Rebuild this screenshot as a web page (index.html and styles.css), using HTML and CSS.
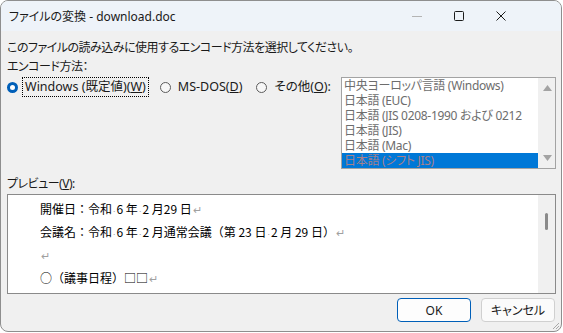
FILE: index.html
```html
<!DOCTYPE html>
<html lang="ja">

<head>
    <meta charset="UTF-8">
    <title>ファイルの変換</title>
    <link rel="stylesheet" href="styles.css">
</head>

<body>
    <div class="window">
        <div class="titlebar">
            <span class="title">ファイルの変換 - download.doc</span>
            <span class="cap">
                <svg width="10" height="10" viewBox="0 0 10 10"><path d="M0 5.5h10" stroke="#b4b4b4" stroke-width="1" /></svg>
            </span>
            <span class="cap">
                <svg width="10" height="10" viewBox="0 0 10 10"><rect x="0.5" y="0.5" width="9" height="9" rx="1" fill="none" stroke="#1b1b1b" stroke-width="1" /></svg>
            </span>
            <span class="cap">
                <svg width="10" height="10" viewBox="0 0 10 10"><path d="M0.5 0.5l9 9M9.5 0.5l-9 9" stroke="#1b1b1b" stroke-width="1" /></svg>
            </span>
        </div>

        <div class="content">
            <p class="line jp">このファイルの読み込みに使用するエンコード方法を選択してください。</p>
            <p class="line jp label">エンコード方法：</p>

            <div class="enc">
                <div class="radios">
                    <div class="radio">
                        <span class="dot checked"></span>
                        <span class="rtext focus">Windows (既定値)(<u>W</u>)</span>
                    </div>
                    <div class="radio">
                        <span class="dot"></span>
                        <span class="rtext">MS-DOS(<u>D</u>)</span>
                    </div>
                    <div class="radio">
                        <span class="dot"></span>
                        <span class="rtext">その他(<u>O</u>):</span>
                    </div>
                </div>

                <div class="listbox">
                    <ul class="items">
                        <li>中央ヨーロッパ言語 (Windows)</li>
                        <li>日本語 (EUC)</li>
                        <li>日本語 (JIS 0208-1990 および 0212</li>
                        <li>日本語 (JIS)</li>
                        <li>日本語 (Mac)</li>
                        <li class="selected">日本語 (シフト JIS)</li>
                    </ul>
                    <div class="lscroll">
                        <svg width="9" height="6" viewBox="0 0 9 6"><path d="M0 6L4.5 0L9 6z" fill="#a3a3a3" /></svg>
                        <svg width="9" height="6" viewBox="0 0 9 6"><path d="M0 0L4.5 6L9 0z" fill="#a3a3a3" /></svg>
                    </div>
                </div>
            </div>

            <p class="line jp preview-label">プレビュー(<u>V</u>):</p>

            <div class="preview">
                <div class="doc">
                    <p>開催日：令和<span class="sp">·</span>6 年<span class="sp">·</span>2 月29 日<span class="ret">↵</span></p>
                    <p>会議名：令和<span class="sp">·</span>6 年<span class="sp">·</span>2 月通常会議（第 23 日<span class="sp">·</span>2 月 29 日）<span class="ret">↵</span></p>
                    <p><span class="ret">↵</span></p>
                    <p>○（議事日程）□□<span class="ret">↵</span></p>
                </div>
                <div class="pscroll"><span class="thumb"></span></div>
            </div>

            <div class="buttons">
                <button class="btn default">OK</button>
                <button class="btn">キャンセル</button>
            </div>
        </div>

        <svg class="grip" width="8" height="8" viewBox="0 0 8 8">
            <path d="M7 1L1 7M7 4L4 7" stroke="#a8a8a8" stroke-width="1" />
        </svg>
    </div>
</body>

</html>
```

FILE: styles.css
```css
* {
    padding: 0;
    margin: 0;
    box-sizing: border-box;
}

body {
    background-color: #fff;
    font-family: "Noto Sans", "Noto Sans CJK JP", sans-serif;
    font-size: 12px;
    color: #1a1a1a;
    font-feature-settings: "palt";
}

.window {
    position: relative;
    width: 562px;
    height: 332px;
    border: 1px solid #8e8e8e;
    border-radius: 8px;
    overflow: hidden;
    background-color: #f0f0f0;
    display: flex;
    flex-direction: column;
}

.titlebar {
    height: 30px;
    background-color: #eef3f9;
    display: flex;
    align-items: center;
    padding-right: 39px;
}

.title {
    flex: 1;
    padding-left: 8px;
    font-size: 12px;
}

.cap {
    width: 42px;
    height: 30px;
    display: flex;
    align-items: center;
    justify-content: center;
}

.content {
    flex: 1;
    display: flex;
    flex-direction: column;
    padding: 9px 5px 0 6px;
}

.line {
    height: 15px;
    line-height: 15px;
    white-space: nowrap;
}

.jp {
    letter-spacing: -0.5px;
}

.label {
    margin-top: 4px;
}

/* encoding row */

.enc {
    display: flex;
    margin-top: 3px;
}

.radios {
    flex: 1;
    min-width: 0;
    display: flex;
    align-items: center;
    height: 20px;
    white-space: nowrap;
}

.radio {
    display: flex;
    align-items: center;
    flex-shrink: 0;
    margin-right: 11px;
}

.dot {
    width: 11px;
    height: 11px;
    flex-shrink: 0;
    border-radius: 50%;
    border: 1px solid #5c5c5c;
    background-color: #f7f7f7;
    margin-right: 4px;
}

.dot.checked {
    border: 3.5px solid #005fb8;
    background-color: #fff;
}

.rtext {
    font-size: 12.5px;
    line-height: 18px;
    padding: 0 2px;
    border: 1px solid transparent;
}

.rtext.focus {
    border: 1px dotted #000;
}

.listbox {
    width: 215px;
    height: 92px;
    flex-shrink: 0;
    border: 1px solid #a3a3a3;
    background-color: #fff;
    display: flex;
    overflow: hidden;
}

.items {
    list-style: none;
    width: 196px;
    overflow: hidden;
}

.items li {
    height: 15px;
    line-height: 15px;
    padding-left: 2px;
    color: #6d6d6d;
    letter-spacing: -0.3px;
    white-space: nowrap;
    overflow: hidden;
}

.items li.selected {
    background-color: #0078d7;
    color: #a8808a;
}

.lscroll {
    width: 17px;
    background-color: #f0f0f0;
    display: flex;
    flex-direction: column;
    justify-content: space-between;
    align-items: center;
    padding: 7px 0 7px 1px;
}

/* preview */

.preview-label {
    margin-top: 7px;
}

.preview {
    margin-top: 3px;
    height: 100px;
    border: 1px solid #8a8a8a;
    background-color: #fff;
    display: flex;
}

.doc {
    flex: 1;
    padding: 2px 0 0 32px;
    font-family: "Noto Sans CJK JP", sans-serif;
    font-feature-settings: normal;
    font-size: 12px;
    color: #000;
}

.doc p {
    height: 23px;
    line-height: 23px;
    white-space: nowrap;
}

.sp {
    color: #a0a0a0;
    font-size: 8px;
}

.ret {
    color: #a0a0a0;
    font-size: 11px;
    margin-left: 1px;
}

.pscroll {
    width: 17px;
    background-color: #f0f0f0;
    padding: 18px 0 0 7px;
}

.thumb {
    display: block;
    width: 3px;
    height: 17px;
    border-radius: 2px;
    background-color: #8a8a8a;
}

/* buttons */

.buttons {
    display: flex;
    justify-content: flex-end;
    gap: 10px;
    margin-top: 4px;
    padding-right: 1px;
}

.btn {
    width: 74px;
    height: 24px;
    border-radius: 4px;
    border: 1px solid #d0d0d0;
    background-color: #fbfbfb;
    font-family: "Noto Sans", "Noto Sans CJK JP", sans-serif;
    font-feature-settings: "palt";
    font-size: 12px;
    color: #1a1a1a;
}

.btn.default {
    border: 1px solid #005fb8;
    background-color: #fdfdfd;
}

.grip {
    position: absolute;
    right: 1px;
    bottom: 1px;
}
```
